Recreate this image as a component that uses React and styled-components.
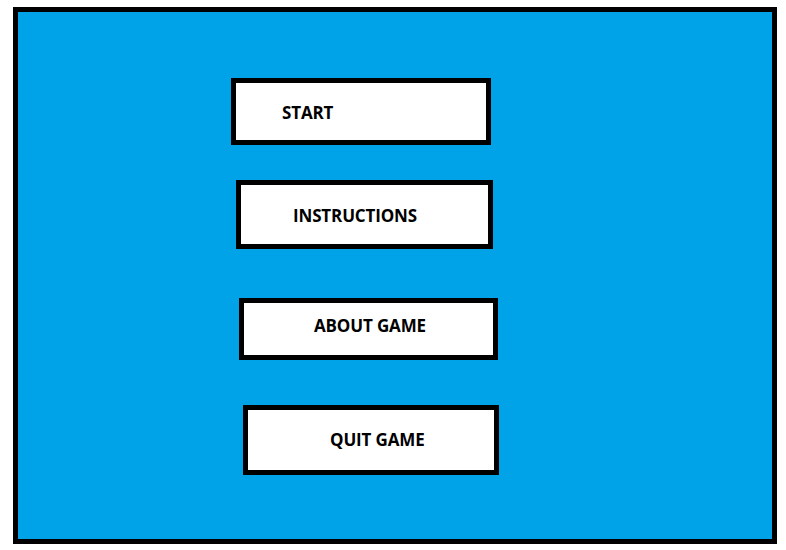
import styled, { createGlobalStyle } from "styled-components";

const GlobalStyle = createGlobalStyle`
  html, body {
    margin: 0;
    padding: 0;
    background: #ffffff;
  }
`;

const Page = styled.div`
  width: 786px;
  height: 550px;
  padding: 7px 9px 6px 13px;
  box-sizing: border-box;
`;

const Frame = styled.div`
  width: 764px;
  height: 537px;
  box-sizing: border-box;
  border: 5px solid #000000;
  background: #00a2e8;
  display: flex;
  flex-direction: column;
  align-items: flex-start;
`;

// shift > 0 pushes the label down, < 0 lifts it up
const MenuButton = styled.div`
  box-sizing: border-box;
  width: ${(p) => p.$w}px;
  height: ${(p) => p.$h}px;
  margin-left: ${(p) => p.$x}px;
  margin-top: ${(p) => p.$gap}px;
  padding-left: ${(p) => p.$indent}px;
  padding-top: ${(p) => Math.max(p.$shift, 0)}px;
  padding-bottom: ${(p) => Math.max(-p.$shift, 0)}px;
  border: 5px solid #000000;
  background: #ffffff;
  display: flex;
  align-items: center;
  font-family: "Open Sans", "Liberation Sans", sans-serif;
  font-weight: 700;
  font-size: 17px;
  letter-spacing: -0.15px;
  color: #000000;
  cursor: pointer;
`;

const items = [
  { label: "START", x: 213, gap: 66, w: 260, h: 67, indent: 46, shift: 2 },
  { label: "INSTRUCTIONS", x: 218, gap: 35, w: 257, h: 69, indent: 52, shift: 2 },
  { label: "ABOUT GAME", x: 221, gap: 49, w: 259, h: 62, indent: 70, shift: -7 },
  { label: "QUIT GAME", x: 225, gap: 45, w: 256, h: 70, indent: 82, shift: -1 },
];

const App = () => {
  return (
    <>
      <GlobalStyle />
      <Page>
        <Frame>
          {items.map((item) => (
            <MenuButton
              key={item.label}
              $x={item.x}
              $gap={item.gap}
              $w={item.w}
              $h={item.h}
              $indent={item.indent}
              $shift={item.shift}
            >
              {item.label}
            </MenuButton>
          ))}
        </Frame>
      </Page>
    </>
  );
};

export default App;
